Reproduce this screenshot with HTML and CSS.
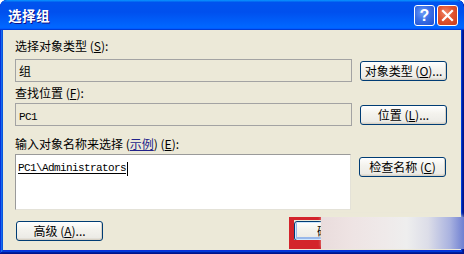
FILE: index.html
```html
<!DOCTYPE html>
<html lang="zh-CN">
<head>
<meta charset="utf-8">
<title>选择组</title>
<link rel="stylesheet" href="styles.css">
</head>
<body>
<div class="window">
  <div class="titlebar">
    <span class="title">选择组</span>
    <div class="controls">
      <div class="cbtn help">?</div>
      <div class="cbtn close">
        <svg width="13" height="13" viewBox="0 0 13 13"><path d="M2 2 L11 11 M11 2 L2 11" stroke="#fff" stroke-width="2.2" stroke-linecap="square"/></svg>
      </div>
    </div>
  </div>
  <div class="body">
    <div class="label l1">选择对象类型 (<u>S</u>):</div>
    <div class="row">
      <div class="field">组</div>
      <div class="btn">对象类型 (<u>O</u>)...</div>
    </div>
    <div class="label l2">查找位置 (<u>F</u>):</div>
    <div class="row">
      <div class="field"><span class="mono">PC1</span></div>
      <div class="btn">位置 (<u>L</u>)...</div>
    </div>
    <div class="label l3">输入对象名称来选择 (<span class="link">示例</span>) (<u>E</u>):</div>
    <div class="row top">
      <div class="textarea"><span class="mono resolved">PC1\Administrators</span><span class="caret"></span></div>
      <div class="btn check">检查名称 (<u>C</u>)</div>
    </div>
    <div class="footer">
      <div class="btn adv">高级 (<u>A</u>)...</div>
      <div class="right-group">
        <div class="btn ok">确定</div>
        <div class="btn">取消</div>
      </div>
    </div>
  </div>
  <div class="redmark"></div>
  <div class="watermark"></div>
</div>
</body>
</html>
```
FILE: styles.css
```css
html, body {
  margin: 0;
  padding: 0;
  width: 464px;
  height: 254px;
  overflow: hidden;
  background: #ffffff;
}

.window {
  position: relative;
  width: 464px;
  height: 254px;
  background: #0831d9;
  border-radius: 7px 7px 0 0;
  box-shadow: inset -1px -1px #00138c, inset 1px 1px #0831d9, inset -2px -2px #001ea0, inset 2px 2px #166aee, inset -3px -3px #003bda, inset 3px 3px #0855dd;
  display: flex;
  flex-direction: column;
  overflow: hidden;
  font-family: "Noto Sans CJK SC", "Liberation Sans", sans-serif;
  font-size: 12px;
  color: #000;
}

.titlebar {
  height: 30px;
  flex: none;
  display: flex;
  align-items: center;
  justify-content: space-between;
  padding: 0 6px 0 8px;
  background: linear-gradient(180deg, #0997ff, #0053ee 8%, #0050ee 40%, #06f 88%, #06f 93%, #005bff 95%, #003dd7 96%, #003dd7);
  border-radius: 7px 7px 0 0;
}

.title {
  color: #fff;
  font-weight: bold;
  font-size: 13.5px;
  line-height: 16px;
  letter-spacing: 0.5px;
  text-shadow: 1px 1px #0f1089;
}

.controls {
  display: flex;
  gap: 2px;
  margin-top: 1px;
}

.cbtn {
  width: 19px;
  height: 19px;
  border: 1px solid #fff;
  border-radius: 3px;
  display: flex;
  align-items: center;
  justify-content: center;
  box-sizing: content-box;
}

.help {
  background: radial-gradient(circle at 40% 35%, #6d9cf6 0, #3a6fe6 45%, #1e4fd0 100%);
  color: #fff;
  font-family: "Liberation Sans", sans-serif;
  font-weight: bold;
  font-size: 16px;
  line-height: 19px;
}

.close {
  background: radial-gradient(circle at 40% 35%, #f0876a 0, #e0532f 45%, #c93c1c 100%);
}

.body {
  flex: 1;
  margin: 0 3px 4px 3px;
  background: #ece9d8;
  padding: 8px 0 0 12px;
  display: flex;
  flex-direction: column;
}

.label {
  height: 16px;
  line-height: 16px;
  white-space: nowrap;
}

.l1 { margin-bottom: 5px; }
.l2 { margin-top: 3px; margin-bottom: 2px; }
.l3 { margin-top: 10px; margin-bottom: 2px; }

u {
  text-decoration: underline;
  text-underline-offset: 1px;
}

.link {
  color: #22228a;
  text-decoration: underline;
  text-underline-offset: 1px;
}

.row {
  display: flex;
  align-items: center;
  gap: 8px;
}

.row.top {
  align-items: flex-start;
}

.field {
  width: 337px;
  height: 23px;
  box-sizing: border-box;
  border: 1px solid #a3a3a3;
  background: #ece9d8;
  padding: 0 3px;
  line-height: 21px;
}

.mono {
  font-family: "Liberation Mono", "DejaVu Sans Mono", monospace;
  font-size: 11px;
  letter-spacing: -0.6px;
}

.textarea {
  width: 336px;
  height: 56px;
  box-sizing: border-box;
  border-style: solid;
  border-width: 1px;
  border-color: #9a9a9a #e4e2d8 #e4e2d8 #9a9a9a;
  background: #fff;
  padding: 6px 2px 0 2px;
  line-height: 14px;
  display: flex;
  align-items: flex-start;
}

.resolved {
  text-decoration: underline;
  text-underline-offset: 2px;
}

.caret {
  width: 1px;
  height: 14px;
  background: #000;
  margin-left: 1px;
  margin-top: 1px;
}

.btn {
  width: 87px;
  height: 20px;
  box-sizing: border-box;
  border: 1px solid #003c74;
  border-radius: 3px;
  background: linear-gradient(180deg, #fff, #f4f3ee 40%, #ecebe6 86%, #d6d0c5);
  box-shadow: inset -1px -1px 0 #d8d2c6;
  display: flex;
  align-items: center;
  justify-content: center;
  white-space: nowrap;
  line-height: 18px;
  flex: none;
}

.check {
  margin-top: 3px;
}

.footer {
  margin-top: 11px;
  display: flex;
  align-items: center;
}

.adv {
  margin-left: 1px;
}

.right-group {
  display: flex;
  gap: 3px;
  margin-left: auto;
  margin-right: 14px;
}

.right-group .btn {
  width: 75px;
}

.ok {
  padding-right: 5px;
  box-shadow: inset 0 0 0 1px #cee7ff, inset 0 -1px 0 2px #98b8ea;
}

.redmark {
  position: absolute;
  left: 289px;
  top: 217px;
  width: 40px;
  height: 20px;
  border-style: solid;
  border-color: #d3242b;
  border-width: 3px 0 9px 5px;
}

.watermark {
  position: absolute;
  left: 321px;
  top: 217px;
  width: 143px;
  height: 32px;
  background: linear-gradient(90deg, #e9dcdc 0%, #eee3e3 20%, #efeaea 45%, #eeeeee 60%, #dcdde8 75%, #aab3e0 90%, #6f80d2 100%);
  box-shadow: 0 -2px 3px rgba(236, 233, 216, 0.6);
}
```
